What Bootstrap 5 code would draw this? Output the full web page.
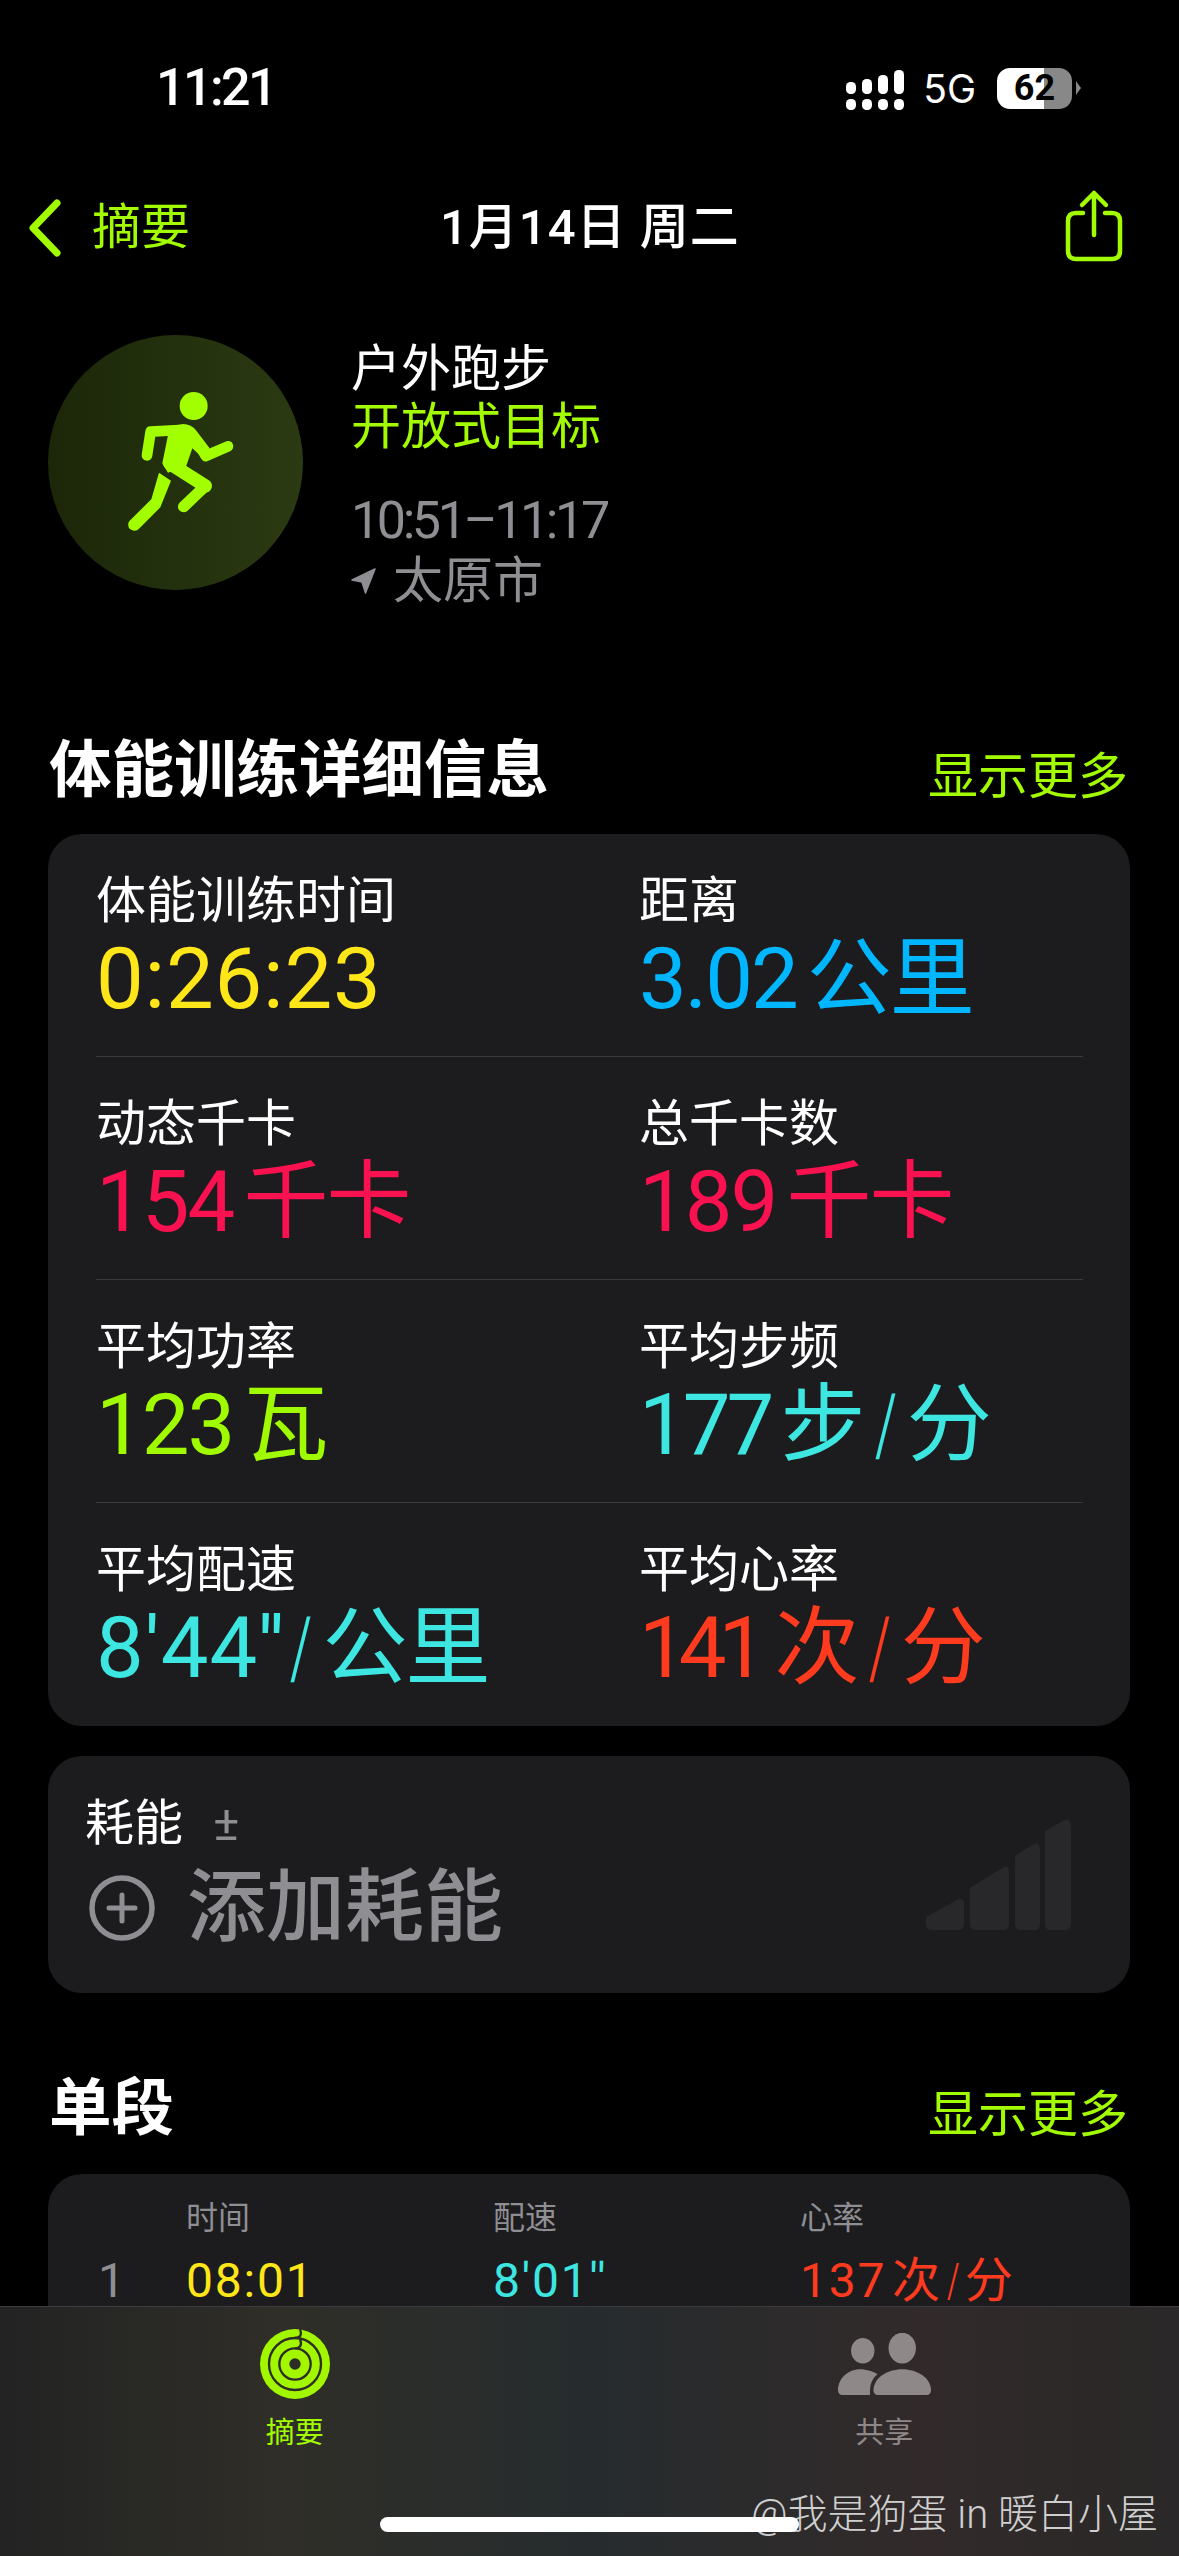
<!DOCTYPE html>
<html lang="zh-CN">
<head>
    <meta charset="UTF-8">
    <meta name="viewport" content="width=device-width, initial-scale=1.0">
    <title>体能训练详细信息</title>
    <link href="https://cdn.jsdelivr.net/npm/bootstrap@5.3.0/dist/css/bootstrap.min.css" rel="stylesheet">
    <style>
        html, body { background: #000; }
        body { font-family: Roboto, "Noto Sans CJK SC", sans-serif; color: #fff; width: 1179px; height: 2556px; overflow: hidden; position: relative; }
        .c-green { color: #a2fb00; }
        .c-gray { color: #8e8e93; }
        .c-yellow { color: #ffe619; }
        .c-blue { color: #00b6ff; }
        .c-pink { color: #fa1150; }
        .c-lime { color: #a0fb00; }
        .c-cyan { color: #3de6e0; }
        .c-red { color: #ff3b1f; }
        .slash { display: inline-block; transform: scaleX(.55) skewX(-4deg); margin: 0 -5px; }

        .status-bar { height: 176px; padding: 0 98px 0 156px; }
        .status-time { font-size: 52px; font-weight: 500; letter-spacing: -2.6px; line-height: 1; }
        .status-net { font-family: Inter, sans-serif; font-size: 39px; line-height: 1; margin: 0 21px 0 18px; }
        .battery-body { width: 75px; height: 41px; border-radius: 13px; background: linear-gradient(90deg, #fff 63%, #888 63%); color: #000; font-size: 36px; font-weight: 700; line-height: 41px; text-align: center; }

        .top-nav { height: 104px; padding: 0 55px 0 28px; }
        .nav-back { font-size: 49px; line-height: 60px; gap: 30px; }
        .nav-title { font-size: 49px; font-weight: 500; line-height: 60px; left: 440px; top: 22px; letter-spacing: 1px; }
        .share-icon { margin-top: -3px; }

        .head-block { margin-top: 55px; padding-left: 48px; gap: 48px; }
        .ring-disc { width: 255px; height: 255px; border-radius: 50%; background: linear-gradient(90deg, #1b2708, #2c3a13); }
        .head-line { font-size: 50px; line-height: 63px; }
        .head-first { margin: 3px 0 -5px; }
        .head-time { font-size: 52px; line-height: 60px; margin-top: 32px; letter-spacing: -3.4px; }
        .head-place { font-size: 50px; line-height: 66px; gap: 17px; margin-top: -3px; }

        .sect-head { padding: 0 51px 0 49px; height: 70px; margin-top: 122px; margin-bottom: 28px; }
        .sect-title { font-size: 62.5px; font-weight: 700; line-height: 70px; }
        .sect-more { font-size: 50px; line-height: 70px; padding-top: 6px; }

        .sheet { margin: 0 49px 0 48px; background: #1c1c1e; border-radius: 34px; border: 0; }
        .metric-rows { padding: 0 47px 0 48px; }
        .metric-row { height: 223px; padding-top: 37px; border-bottom: 1px solid #3a3a3c; }
        .metric-row:last-child { border-bottom: 0; }
        .metric-cell { width: 543px; }
        .metric-label { font-size: 50px; line-height: 60px; }
        .metric-value { font-size: 85px; line-height: 96px; white-space: nowrap; letter-spacing: -2px; word-spacing: -9px; }
        .metric-clock { letter-spacing: .8px; }
        .metric-pace { letter-spacing: 1px; margin-right: 4px; }
        .tight-ones { letter-spacing: -4px; }
        .tighter-ones { letter-spacing: -8px; margin-right: 6px; }

        .burn-sheet { height: 237px; margin-top: 30px; padding: 36px 59px 0 37px; }
        .burn-label { font-size: 49px; line-height: 64px; gap: 30px; }
        .burn-add { font-size: 79px; font-weight: 500; line-height: 90px; gap: 32px; margin-top: 7px; }
        .burn-bars { margin-top: 27px; }

        .split-head { margin-top: 81px; margin-bottom: 30px; }
        .split-sheet { height: 300px; padding: 20px 0 0 50px; }
        .split-num { width: 88px; }
        .split-col { width: 307px; }
        .split-label { font-size: 32px; line-height: 48px; }
        .split-row { font-size: 48px; line-height: 60px; margin-top: 9px; letter-spacing: 1.8px; word-spacing: -8px; }

        .tab-bar { height: 250px; border-top: 1px solid #3d3d3f; background: linear-gradient(90deg, #232323 0%, #2f2e28 24%, #262c2e 50%, #322a2a 78%, #2a2828 100%); }
        .tab-icon { height: 70px; margin-top: 22px; }
        .tab-label { font-size: 29px; line-height: 34px; margin-top: 17px; }
        .tab-share { color: #8f8888; }
        .home-bar { width: 419px; height: 15px; border-radius: 8px; background: #fff; left: 380px; bottom: 24px; }
        .mark-text { font-size: 40px; line-height: 50px; color: #cfcfcf; font-weight: 300; right: 21px; bottom: 16px; white-space: nowrap; }
    </style>
</head>
<body>
    <div class="status-bar d-flex align-items-center justify-content-between">
        <div class="status-time">11:21</div>
        <div class="d-flex align-items-center">
            <svg width="60" height="50" viewBox="0 0 60 50" fill="#fff">
                <rect x="1" y="19" width="10" height="12" rx="4.5"/><rect x="17" y="16" width="10" height="15" rx="4.5"/><rect x="33" y="12" width="10" height="19" rx="4.5"/><rect x="49" y="7" width="10" height="24" rx="4.5"/>
                <rect x="1" y="36" width="10" height="11" rx="4.5"/><rect x="17" y="36" width="10" height="11" rx="4.5"/><rect x="33" y="36" width="10" height="11" rx="4.5"/><rect x="49" y="36" width="10" height="11" rx="4.5"/>
            </svg>
            <div class="status-net">5G</div>
            <div class="battery-body">62</div>
            <svg class="ms-1" width="5" height="14" viewBox="0 0 5 14" fill="#888"><path d="M0 0 L5 7 L0 14Z"/></svg>
        </div>
    </div>

    <div class="top-nav d-flex align-items-center justify-content-between position-relative">
        <div class="nav-back d-flex align-items-center c-green">
            <svg width="34" height="58" viewBox="0 0 34 58" fill="none" stroke="#a2fb00" stroke-width="7" stroke-linecap="round" stroke-linejoin="round"><path d="M29 4 L5 29 L29 54"/></svg>
            <span>摘要</span>
        </div>
        <div class="nav-title position-absolute">1月14日 周二</div>
        <svg class="share-icon" width="60" height="76" viewBox="0 0 60 76" fill="none" stroke="#a2fb00" stroke-width="4.5" stroke-linecap="round" stroke-linejoin="round">
            <path d="M19 24 H12 Q4 24 4 32 V62 Q4 70 12 70 H48 Q56 70 56 62 V32 Q56 24 48 24 H41"/>
            <path d="M30 46 V4 M18 16 L30 4 L42 16"/>
        </svg>
    </div>

    <div class="head-block d-flex">
        <div class="ring-disc flex-shrink-0">
            <svg width="255" height="255" viewBox="25 45 765 765" fill="#a2ff00">
                <circle cx="462" cy="258" r="42"/>
                <path d="M385 320 L430 312 Q455 312 470 332 L510 385 L480 405 L458 385 L440 437 L385 458 L368 430 L384 350 Z"/>
                <path d="M358 458 L394 482 L362 562 L298 626 A18 18 0 0 1 270 602 L335 538 Z"/>
                <g fill="none" stroke="#a2ff00" stroke-linecap="round" stroke-linejoin="round">
                    <path d="M322 406 L333 335 L420 330" stroke-width="32"/>
                    <path d="M485 385 L498 408 L565 379" stroke-width="32"/>
                    <path d="M390 430 L497 498" stroke-width="40"/>
                    <path d="M497 498 L432 560" stroke-width="34"/>
                </g>
            </svg>
        </div>
        <div>
            <div class="head-line head-first">户外跑步</div>
            <div class="head-line c-green">开放式目标</div>
            <div class="head-time c-gray">10:51–11:17</div>
            <div class="head-place c-gray d-flex align-items-center">
                <svg width="25" height="26" viewBox="0 0 25 26" fill="#8e8e93" stroke="#8e8e93" stroke-width="1.5" stroke-linejoin="round"><path d="M24 1 L1 12 L11 14 L14.5 25 Z"/></svg>
                <span>太原市</span>
            </div>
        </div>
    </div>

    <div class="sect-head d-flex justify-content-between">
        <div class="sect-title">体能训练详细信息</div>
        <div class="sect-more c-green">显示更多</div>
    </div>

    <div class="card sheet metric-rows">
        <div class="metric-row d-flex">
            <div class="metric-cell"><div class="metric-label">体能训练时间</div><div class="metric-value metric-clock c-yellow">0:26:23</div></div>
            <div><div class="metric-label">距离</div><div class="metric-value c-blue">3.02 公里</div></div>
        </div>
        <div class="metric-row d-flex">
            <div class="metric-cell"><div class="metric-label">动态千卡</div><div class="metric-value c-pink">154 千卡</div></div>
            <div><div class="metric-label">总千卡数</div><div class="metric-value c-pink">189 千卡</div></div>
        </div>
        <div class="metric-row d-flex">
            <div class="metric-cell"><div class="metric-label">平均功率</div><div class="metric-value c-lime">123 瓦</div></div>
            <div><div class="metric-label">平均步频</div><div class="metric-value c-cyan"><span class="tight-ones">177</span> 步 <span class="slash">/</span> 分</div></div>
        </div>
        <div class="metric-row d-flex">
            <div class="metric-cell"><div class="metric-label">平均配速</div><div class="metric-value c-cyan"><span class="metric-pace">8'44''</span><span class="slash">/</span> 公里</div></div>
            <div><div class="metric-label">平均心率</div><div class="metric-value c-red"><span class="tighter-ones">141</span> 次 <span class="slash">/</span> 分</div></div>
        </div>
    </div>

    <div class="card sheet burn-sheet flex-row justify-content-between">
        <div>
            <div class="burn-label d-flex">
                <span>耗能</span>
                <span class="c-gray">±</span>
            </div>
            <div class="burn-add c-gray d-flex align-items-center">
                <svg class="ms-1" width="66" height="66" viewBox="0 0 66 66" fill="none" stroke="#8e8e93"><circle cx="33" cy="33" r="30" stroke-width="5.5"/><path d="M33 20 V46 M20 33 H46" stroke-width="5" stroke-linecap="round"/></svg>
                <span>添加耗能</span>
            </div>
        </div>
        <svg class="burn-bars" width="145" height="111" viewBox="0 0 145 111" fill="#28282b">
            <path d="M0 98 L29 82 Q38 76 38 86 V105 Q38 111 32 111 H6 Q0 111 0 105Z"/>
            <path d="M44 69 L76 49 Q83 44 83 54 V105 Q83 111 77 111 H50 Q44 111 44 105Z"/>
            <path d="M89 37 L106 26 Q114 21 114 32 V105 Q114 111 108 111 H95 Q89 111 89 105Z"/>
            <path d="M119 12 L137 2 Q145 -2 145 8 V105 Q145 111 139 111 H125 Q119 111 119 105Z"/>
        </svg>
    </div>

    <div class="sect-head split-head d-flex justify-content-between">
        <div class="sect-title">单段</div>
        <div class="sect-more c-green">显示更多</div>
    </div>

    <div class="card sheet split-sheet">
        <div class="d-flex split-label c-gray">
            <div class="split-num"></div>
            <div class="split-col">时间</div>
            <div class="split-col">配速</div>
            <div class="split-col">心率</div>
        </div>
        <div class="d-flex split-row">
            <div class="split-num c-gray">1</div>
            <div class="split-col c-yellow">08:01</div>
            <div class="split-col c-cyan">8'01''</div>
            <div class="split-col c-red">137 次 <span class="slash">/</span> 分</div>
        </div>
    </div>

    <div class="tab-bar position-absolute bottom-0 start-0 w-100">
        <div class="row g-0">
            <div class="col-6 text-center c-green">
                <div class="tab-icon d-flex align-items-center justify-content-center">
                    <svg width="70" height="70" viewBox="85 85 210 210">
                        <circle cx="190" cy="190" r="105" fill="#a2f700"/>
                        <g fill="none" stroke="#2d2d28" stroke-width="7">
                            <circle cx="190" cy="190" r="78"/>
                            <circle cx="190" cy="190" r="47"/>
                            <path d="M205 85 C212 105 204 112 190 112"/>
                            <path d="M205 116 C212 132 206 143 190 143"/>
                        </g>
                        <circle cx="190" cy="190" r="17" fill="#2d2d28"/>
                    </svg>
                </div>
                <div class="tab-label">摘要</div>
            </div>
            <div class="col-6 text-center tab-share">
                <div class="tab-icon d-flex align-items-center justify-content-center">
                    <svg width="93" height="62" viewBox="84 97 278 185" fill="#8f8888">
                        <ellipse cx="158" cy="150" rx="35" ry="38"/>
                        <ellipse cx="276" cy="142" rx="41" ry="46"/>
                        <path d="M84 268 C84 232 115 205 150 205 C170 205 190 212 202 220 C186 232 178 252 180 282 H98 Q84 282 84 268Z"/>
                        <path d="M190 268 C190 232 230 205 276 205 C322 205 362 232 362 268 Q362 282 348 282 H204 Q190 282 190 268Z"/>
                    </svg>
                </div>
                <div class="tab-label">共享</div>
            </div>
        </div>
    </div>
    <div class="mark-text position-absolute">@我是狗蛋 in 暖白小屋</div>
    <div class="home-bar position-absolute"></div>

    <script src="https://cdn.jsdelivr.net/npm/bootstrap@5.3.0/dist/js/bootstrap.bundle.min.js"></script>
</body>
</html>
